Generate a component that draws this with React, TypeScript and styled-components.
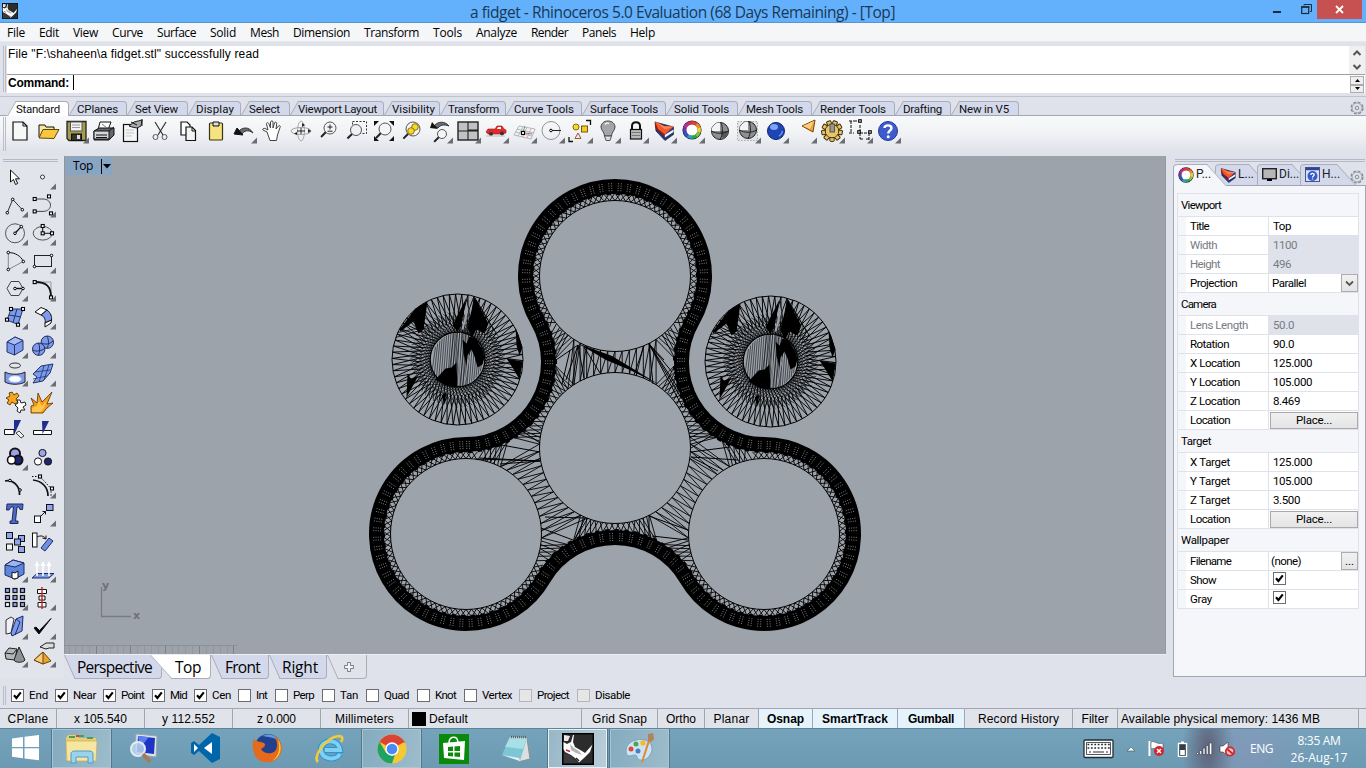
import React, { ReactNode, useLayoutEffect, useRef } from 'react';
import styled, { createGlobalStyle, css } from 'styled-components';

const ui = '"Open Sans", "Noto Sans", sans-serif';
const sans = '"Liberation Sans", Arial, sans-serif';
const narrow = 'Roboto, "Liberation Sans", sans-serif';

const Global = createGlobalStyle`
  * { box-sizing: border-box; }
  body { margin: 0; background: #dfe2ea; overflow: hidden; }
  svg { display: block; flex: none; }
`;

/* ---------- text helper: tracks a label so that it fills a given width ---------- */
const FitSpan = styled.span`
  white-space: pre;
  display: inline-block;
`;
const Fit = ({ w, children }: { w: number; children: string }) => {
  const ref = useRef<HTMLSpanElement>(null);
  useLayoutEffect(() => {
    const n = ref.current;
    if (!n) return;
    n.style.letterSpacing = '0px';
    const natural = n.getBoundingClientRect().width;
    n.style.letterSpacing = `${(w - natural) / children.length}px`;
  }, [w, children]);
  return <FitSpan ref={ref}>{children}</FitSpan>;
};

/* ---------- page frame ---------- */
const Screen = styled.div`
  width: 1366px;
  height: 768px;
  display: flex;
  flex-direction: column;
  background: #dfe2ea;
  color: #000;
  font: 12px ${sans};
  overflow: hidden;
  & > * { min-height: 0; }
`;
const TitleBar = styled.header`
  flex: 0 0 23px;
  display: grid;
  grid-template-columns: 120px 1fr 107px;
  background: #63b1fc;
  border-bottom: 1px solid #5795cf;
`;
const TitleIcon = styled.div`
  padding: 3px 2px;
`;
const TitleText = styled.div`
  font: 15.5px/22px ${ui};
  color: #1a3854;
  text-align: center;
  padding-top: 1px;
  padding-right: 27px;
  padding-left: 13px;
`;
const WinButtons = styled.div`
  display: flex;
  height: 19px;
`;
const WinButton = styled.div<{ $w: number; $close?: boolean }>`
  width: ${p => p.$w}px;
  display: flex;
  align-items: center;
  justify-content: center;
  background: ${p => (p.$close ? '#c75050' : 'transparent')};
`;
const MenuBar = styled.nav`
  flex: 0 0 19px;
  display: flex;
  gap: 14px;
  padding-left: 7px;
  background: #f4f6f8;
  border-bottom: 1px solid #e6e8ec;
  font: 12px/20px ${ui};
`;
const CommandArea = styled.section`
  flex: 0 0 55px;
  display: flex;
  padding: 4px 1px 0 3px;
  border-bottom: 1px solid #bfc3ce;
`;
const Grip = styled.div<{ $h: number }>`
  width: 3px;
  height: ${p => p.$h}px;
  border: solid #b9bec9;
  border-width: 0 1px;
  margin-right: 1px;
`;
const CommandBox = styled.div`
  flex: 1;
  height: 47px;
  display: flex;
  flex-direction: column;
  background: #fff;
`;
const HistoryRow = styled.div`
  height: 29px;
  display: flex;
  justify-content: space-between;
  border-bottom: 1px solid #9c9fa6;
  line-height: 16px;
  padding-left: 1px;
`;
const PromptRow = styled.div`
  height: 18px;
  display: flex;
  justify-content: space-between;
  padding-left: 1px;
  font-weight: bold;
  line-height: 16px;
`;
const Caret = styled.span`
  display: inline-block;
  width: 1px;
  height: 15px;
  background: #000;
  margin-left: 4px;
  vertical-align: top;
`;
const ScrollCol = styled.div`
  width: 16px;
  background: #f0f0f0;
`;
const SpinCol = styled.div`
  width: 15px;
  display: flex;
  flex-direction: column;
  padding: 1px 1px 0 0;
`;
const SpinButton = styled.div`
  flex: 1;
  border: 1px solid #adadad;
  background: #efefef;
  display: flex;
  align-items: center;
  justify-content: center;
`;
const ToolTabs = styled.div`
  flex: 0 0 19px;
  display: flex;
  padding: 4px 0 0 7px;
  border-bottom: 1px solid #a1a6b1;
`;
const ToolTab = styled.div<{ $w: number; $active?: boolean }>`
  position: relative;
  isolation: isolate;
  width: ${p => p.$w}px;
  height: ${p => (p.$active ? 15 : 14)}px;
  padding-left: ${p => (p.$active ? 9 : 8)}px;
  font: 11.5px/16px ${narrow};
  color: #111;
  &::before, &::after {
    content: '';
    position: absolute;
    z-index: -1;
    top: 0;
    bottom: 0;
    border-top: 1px solid #a9aebb;
    background: ${p => (p.$active ? '#fff' : '#d3d9ea')};
  }
  &::before {
    left: 0;
    width: 50%;
    transform: skewX(-30deg);
    transform-origin: 0 100%;
    border-left: 1px solid #a9aebb;
  }
  &::after {
    left: 45%;
    right: 0;
    border-right: 1px solid #a9aebb;
    border-top-right-radius: 4px;
  }
`;
const TabGear = styled.div`
  margin-left: auto;
  padding-right: 2px;
  height: 13px;
`;
const ToolBar = styled.div`
  flex: 0 0 40px;
  display: flex;
  padding: 1px 0 0 3px;
  background: linear-gradient(#f8f9fa, #f1f3f6 40%, #dfe2ea 92%);
`;
const ToolIcons = styled.div`
  display: flex;
  margin-left: -1px;
`;
const Work = styled.main`
  flex: 0 0 522px;
  display: flex;
`;
const LeftBar = styled.aside`
  width: 64px;
  padding: 3px 0 0 1px;
  background: #e1e4eb;
`;
const HGrip = styled.div<{ $w: number }>`
  width: ${p => p.$w}px;
  height: 3px;
  border: solid #b4b9c4;
  border-width: 1px 0;
  margin-left: 2px;
`;
const LeftGrid = styled.div`
  display: grid;
  grid-template-columns: 28px 28px;
  grid-auto-rows: 28.1px;
  margin-top: 1px;
`;
const Center = styled.div`
  width: 1102px;
  display: flex;
  flex-direction: column;
`;
const Viewport = styled.div`
  position: relative;
  height: 498px;
  background: #9da3ab;
  border-left: 1px solid #8f959f;
  border-right: 1px solid #949aa4;
`;
const Scene = styled.svg`
  position: absolute;
  left: -1px;
  top: 0;
`;
const ViewLabel = styled.div`
  position: absolute;
  left: 1px;
  top: 1px;
  width: 46px;
  height: 18px;
  display: flex;
  background: #89a5c4;
  font: 12px/18px ${ui};
  padding-left: 7px;
`;
const LabelDrop = styled.div`
  margin-left: 8px;
  margin-top: 2px;
  height: 15px;
  border-left: 1px solid #000;
  padding: 5px 0 0 1px;
`;
const ViewTabs = styled.div`
  display: flex;
  height: 24px;
  border-top: 1px solid #eef0f5;
`;
const ViewTab = styled.div<{ $w: number; $pad: number; $active?: boolean; $plain?: boolean; $lap?: number; $skew?: number }>`
  position: relative;
  isolation: isolate;
  width: ${p => p.$w}px;
  margin-left: ${p => -(p.$lap || 0)}px;
  padding-left: ${p => p.$pad}px;
  height: 24px;
  font: 15.5px/25px ${ui};
  &::before, &::after {
    content: '';
    position: absolute;
    z-index: -1;
    top: 0;
    bottom: 0;
    border-bottom: 1px solid #a9aebb;
    background: ${p => (p.$active ? '#fff' : p.$plain ? '#e0e3ea' : '#d3d9ea')};
  }
  &::before {
    left: 0;
    width: 45%;
    transform: skewX(${p => p.$skew || 24}deg);
    transform-origin: 0 0;
    border-left: 1px solid #a9aebb;
  }
  &::after {
    left: ${p => (p.$active ? 40 : 35)}%;
    right: 0;
    border-right: 1px solid #a9aebb;
    border-bottom-right-radius: 4px;
  }
`;
const RightPanel = styled.aside`
  width: 193px;
  margin-left: 7px;
  display: flex;
  flex-direction: column;
  padding-top: 3px;
`;
const PanelTabs = styled.div`
  display: flex;
  height: 21px;
  margin-top: 2px;
`;
const PanelTab = styled.div<{ $w: number; $active?: boolean }>`
  position: relative;
  isolation: isolate;
  display: flex;
  gap: 2px;
  z-index: ${p => (p.$active ? 2 : 1)};
  width: ${p => p.$w}px;
  height: ${p => (p.$active ? 22 : 21)}px;
  padding: 3px 0 0 4px;
  font: 12px/14px ${narrow};
  border-left: 1px solid #a9aebb;
  border-top-left-radius: 4px;
  color: #222;
  &::before, &::after {
    content: '';
    position: absolute;
    z-index: -1;
    top: 0;
    bottom: 0;
    border-top: 1px solid #a9aebb;
    background: ${p => (p.$active ? '#f5f6fa' : '#d3d9ea')};
  }
  &::before {
    left: 0;
    width: 72%;
    border-top-left-radius: 4px;
  }
  &::after {
    left: 8px;
    right: 8px;
    transform: skewX(42deg);
    transform-origin: 0 0;
    border-right: 1px solid #a9aebb;
  }
`;
const PanelGear = styled.div`
  margin-left: auto;
  padding: 6px 2px 0 0;
`;
const PanelBody = styled.div`
  height: 492px;
  border: 1px solid #a1a6b1;
  background: #f5f6fa;
  padding: 7px 6px 0 3px;
`;
const Grid = styled.div`
  border: solid #dfe2ea;
  border-width: 1px 1px 0 1px;
`;
const GroupHead = styled.div`
  height: 23px;
  border-bottom: 1px solid #dfe2ea;
  font: 11.5px/22px ${narrow};
  padding-left: 3px;
`;
const PropRow = styled.div<{ $dim?: boolean }>`
  height: 19px;
  display: grid;
  grid-template-columns: 8px 83px 1fr;
  border-bottom: 1px solid #dfe2ea;
  font: 11.5px/18px ${narrow};
  color: ${p => (p.$dim ? '#777b82' : '#000')};
`;
const PropLabel = styled.div`
  background: #fff;
  padding-left: 4px;
  border-right: 1px solid #dfe2ea;
`;
const PropValue = styled.div<{ $dim?: boolean; $pad?: number }>`
  background: ${p => (p.$dim ? '#dfe2ea' : '#fff')};
  padding-left: ${p => p.$pad ?? 4}px;
  display: flex;
  justify-content: space-between;
`;
const PlaceButton = styled.div`
  flex: 1;
  margin-top: 1px;
  height: 17px;
  border: 1px solid #a9a9ab;
  background: linear-gradient(#f1f1f1, #e4e4e4);
  text-align: center;
  line-height: 15px;
`;
const SmallButton = styled.div`
  width: 17px;
  height: 18px;
  border: 1px solid #adadad;
  background: linear-gradient(#f1f1f1, #e4e4e4);
  display: flex;
  justify-content: center;
  align-items: center;
  line-height: 14px;
`;
const Check = styled.div<{ $dim?: boolean }>`
  width: 13px;
  height: 13px;
  flex: none;
  border: 1px solid ${p => (p.$dim ? '#b4b6ba' : '#6a6c70')};
  background: ${p => (p.$dim ? '#e6e6e6' : '#fff')};
`;
const PropCheck = styled(Check)`
  margin-top: 1px;
`;
const SnapRow = styled.div`
  flex: 0 0 30px;
  display: flex;
  align-items: center;
  padding: 4px 0 0 3px;
`;
const SnapItem = styled.label<{ $w: number }>`
  width: ${p => p.$w}px;
  display: flex;
  align-items: center;
  gap: 5px;
  font: 11.5px/14px ${narrow};
`;
const SnapList = styled.div`
  display: flex;
  padding-left: 4px;
`;
const StatusBar = styled.div`
  flex: 0 0 20px;
  display: flex;
  border-top: 1px solid #a2a6b3;
  font: 12px/18px ${sans};
  background: #e0e3ea;
`;
const StatusCell = styled.div<{ $w: number; $on?: boolean; $left?: boolean }>`
  width: ${p => p.$w}px;
  display: flex;
  align-items: center;
  justify-content: ${p => (p.$left ? 'flex-start' : 'center')};
  gap: 3px;
  padding-left: ${p => (p.$left ? 3 : 0)}px;
  border-right: 1px solid #a2a6b3;
  ${p => p.$on && css`
    background: #e5f3fd;
    font-weight: bold;
  `}
`;
const Swatch = styled.i`
  width: 14px;
  height: 14px;
  background: #000;
`;
const TaskBar = styled.footer`
  flex: 0 0 40px;
  display: flex;
  background:
    radial-gradient(ellipse 26px 60px at 1208px 20px, rgba(84, 78, 98, 0.75), rgba(84, 78, 98, 0) 100%),
    radial-gradient(ellipse 70px 60px at 1250px 20px, rgba(136, 150, 185, 0.7), rgba(136, 150, 185, 0) 100%),
    linear-gradient(#75a3bb, #6d9ab3);
  border-top: 1px solid #5d8498;
`;
const StartButton = styled.div`
  width: 52px;
  padding: 5px 0 0 11px;
`;
const Tasks = styled.div`
  display: flex;
  gap: 3px;
`;
const Task = styled.div<{ $state?: 'open' | 'active' }>`
  width: 59px;
  height: 39px;
  display: flex;
  align-items: center;
  justify-content: center;
  border: 1px solid transparent;
  ${p => p.$state && css`
    border-color: ${p.$state === 'active' ? '#e8f1f5' : '#a9c4d2'};
    background: ${p.$state === 'active' ? 'linear-gradient(100deg, #97b7c7, #b9ced9)' : 'linear-gradient(100deg, #84abbf, #9dbccb)'};
    box-shadow: -1px 0 0 #54788a, 1px 0 0 #54788a;
  `}
`;
const Tray = styled.div`
  margin-left: auto;
  display: flex;
  align-items: center;
  width: 283px;
  color: #fff;
  font: 12px/17px ${ui};
`;
const TraySlot = styled.div<{ $w: number }>`
  width: ${p => p.$w}px;
  flex: none;
`;
const Clock = styled.div`
  text-align: center;
  width: 60px;
`;

/* ---------- small drawings ---------- */
const Tri = () => <path d="M27 20.5V26.5H21Z" fill="#6b6d72" />;
const Tool = ({ children, tri }: { children: ReactNode; tri?: boolean }) => (
  <svg width="28" height="28" viewBox="0 0 28 28" fill="none" stroke="#111" strokeWidth="1">
    {children}
    {tri && <g stroke="none"><Tri /></g>}
  </svg>
);
const Sq = ({ x, y, s = 3 }: { x: number; y: number; s?: number }) => (
  <rect x={x - s / 2} y={y - s / 2} width={s} height={s} fill="#fff" stroke="#000" strokeWidth="1.1" />
);
const Dot = ({ x, y }: { x: number; y: number }) => <circle cx={x} cy={y} r="1.3" fill="#fff" stroke="#000" />;
const Glass = ({ x = 16, y = 11, r = 6, fill = '#f4f5f7' }) => (
  <g>
    <circle cx={x} cy={y} r={r} fill={fill} stroke="#555" />
    <path d={`M${x - r * 0.72} ${y + r * 0.72}L${x - r * 0.72 - 4.6} ${y + r * 0.72 + 4.6}`} stroke="#222" strokeWidth="2" />
  </g>
);
const Gear = () => (
  <svg width="14" height="14" viewBox="0 0 14 14" fill="none" stroke="#888c93">
    <circle cx="7" cy="7" r="5.9" strokeDasharray="3 1.63" strokeWidth="1.3" />
    <circle cx="7" cy="7" r="4.9" strokeWidth="0.7" />
    <circle cx="7" cy="7" r="1.8" />
  </svg>
);
const Tick = () => (
  <svg width="11" height="11" viewBox="0 0 11 11">
    <path d="M2 5.2L4.4 8L8.8 2.4" fill="none" stroke="#000" strokeWidth="2.1" />
  </svg>
);
const wheelColors = ['#e2412c', '#f08a24', '#f2d230', '#7cc63f', '#27a355', '#2a9fc4', '#2c55c8', '#6a35b5', '#b32f9c', '#d92b63'];
const Wheel = ({ cx = 14, cy = 13, r = 7.3, w = 3.4 }) => (
  <g fill="none" stroke="none">
    <circle cx={cx} cy={cy} r={r} stroke="#222" strokeWidth={w + 1.2} />
    {wheelColors.map((c, i) => {
      const a = ((i * 36 - 90) * Math.PI) / 180;
      const b = (((i + 1) * 36 - 88) * Math.PI) / 180;
      return (
        <path key={c} stroke={c} strokeWidth={w}
          d={`M${cx + r * Math.cos(a)} ${cy + r * Math.sin(a)}A${r} ${r} 0 0 1 ${cx + r * Math.cos(b)} ${cy + r * Math.sin(b)}`} />
      );
    })}
    <circle cx={cx} cy={cy} r={r - w / 2} fill="#fff" />
  </g>
);
const Layers = () => (
  <g>
    <path d="M5 5L6 14L15 23.500L23.500 17.500V10Z" fill="#1d3784" stroke="#222" strokeWidth="0.700" />
    <path d="M14.500 18L23.500 12.500V15L15 20.500Z" fill="#f4f4f8" />
    <path d="M5 5L5.500 11L14.500 20V15.500Z" fill="#a3160c" />
    <path d="M5 4.500L14 9L23.500 9.800L15 17.500L8 12Z" fill="#f4572a" />
    <path d="M5 4.500L14 9L23.500 9.800L15 12.500Z" fill="#fb8352" />
  </g>
);
const RhinoHead = ({ size }: { size: number }) => (
  <svg width={size} height={size} viewBox="0 0 32 32">
    <rect x="0.7" y="0.7" width="30.6" height="30.6" fill="#2c2c2d" stroke="#000" strokeWidth="1.4" />
    <path d="M1.500 9L5 11L9 9L11 2H12L11 9L13 14L20 18L23 20L30.500 11.500L28 19L22 25L17 29.500L13 25L9 22L3 19L1.500 16Z" fill="#fff" />
    <path d="M2 2L8 3L6 8L2 8Z" fill="#e9e9ea" />
    <path d="M8 11L12 15L17 18L20 22L14 20L9 17Z" fill="#b5b5b6" />
    <path d="M2 20L8 22L12 26L16 30H2Z" fill="#3b3b3d" />
    <path d="M4 17L8 18.500" stroke="#b5273a" strokeWidth="1.400" fill="none" />
    <path d="M14 25L17 28" stroke="#222" strokeWidth="1.6" />
  </svg>
);

const toolIcons: ReactNode[] = [
  <Tool><path d="M7 5H17L21 9V23H7Z" fill="#f7f7f8" strokeWidth="1.2" /><path d="M17 5V9H21" /></Tool>,
  <Tool><path d="M5 20V8H11L12 10H20V13" fill="#fbe79b" /><path d="M5 21L9 12.500H25L20 21.5Z" fill="#f9c63c" stroke="#5a4310" /></Tool>,
  <Tool tri><path d="M5 4.500H24V23.500H7L5 21.500Z" fill="#a79c4e" stroke="#222" strokeWidth="1.3" /><rect x="8.500" y="5" width="11.500" height="9" fill="#f2f2f2" stroke="#555" /><path d="M10 8H18M10 10.500H18" stroke="#999" /><rect x="9.500" y="17" width="10" height="6.500" fill="#333" /><rect x="15" y="18" width="3" height="4" fill="#ddd" stroke="none" /></Tool>,
  <Tool><path d="M10 5H21L18 13H8Z" fill="#fff" /><path d="M4 14L9 11H24V18L19 23H4Z" fill="#63666b" /><path d="M4 14H19V22H4Z" fill="#d5d6d8" /><path d="M19 14L24 10M6 18H17M6 20.500H17" /><path d="M12 7L17 11" stroke="#777" /></Tool>,
  <Tool><rect x="5.500" y="7.500" width="14" height="17" fill="#f5f5f6" strokeWidth="1.2" /><path d="M8 13H16M8 16H16M8 19H14" stroke="#c2c5c9" /><path d="M11 9L16 5L24 3L23 9L19 11L14 10Z" fill="#a9aaac" stroke="#222" /><path d="M13 5L19 8M24 2V9" /></Tool>,
  <Tool><path d="M9 5L17 18M20 5L12 18" stroke="#333" strokeWidth="1.2" /><circle cx="9.500" cy="20" r="2.500" stroke="#555" /><circle cx="18.500" cy="20" r="2.500" stroke="#555" /></Tool>,
  <Tool><path d="M7 5H13L16 8V18H7Z" fill="#fff" strokeWidth="1.2" /><path d="M12 10H18L21.500 13.500V23.500H12Z" fill="#f3f3f4" strokeWidth="1.2" /><path d="M18 10V14H21" /></Tool>,
  <Tool><rect x="7.500" y="6" width="13" height="17" rx="1" fill="#f7e37f" stroke="#3b3513" strokeWidth="1.2" /><path d="M11 5H17V9H11Z" fill="#ddd" /></Tool>,
  <Tool tri><path d="M8 15C12 10 19 9 23 16C18 12 14 14 12 17Z" fill="#6b6d70" stroke="#333" /><path d="M4 17L7 11L13 18Z" fill="#111" /></Tool>,
  <Tool><path d="M9 15L5 13C4 12 6 10.500 8 12L10 13L8.500 7C8.500 5.500 10.500 5 11 7L12.500 11V5C13 3.500 15 3.500 15 5V11L16.500 6C17 4.500 19 5 18.700 7L18 12L20.500 9C21.500 8 23 9 22 10.500L19.500 18L18.500 23.500H12Z" fill="#fff" stroke="#444" /></Tool>,
  <Tool><ellipse cx="15" cy="14" rx="10" ry="3.500" stroke="#8c8c8c" strokeWidth="0.800" /><ellipse cx="15" cy="14" rx="3.500" ry="10" stroke="#999" strokeWidth="0.800" /><path d="M16 6V10L19 8ZM25 14L22 12V16ZM11 15V18L8 16.500Z" fill="#222" stroke="none" /><path d="M15 11V17M11 14H19" strokeWidth="0.900" /></Tool>,
  <Tool><Glass /><path d="M13.500 10H18.500M16 7.500V12.500M13.500 14.200H18.500" stroke="#222" /></Tool>,
  <Tool><rect x="10.500" y="4.500" width="14" height="12" strokeDasharray="2 1.500" stroke="#333" /><Glass x={14} y={13} r={5.5} fill="#eff1f4" /></Tool>,
  <Tool><Glass x={15} y={12} r={6} /><path d="M4 4H9L4 9ZM24 4V9L19 4ZM24 24H19L24 19ZM4 24V19L9 24Z" fill="#111" stroke="none" /></Tool>,
  <Tool><Glass x={15} y={12} r={7} /><circle cx="17" cy="10" r="3.300" fill="#f7d92c" stroke="#8a7410" /><circle cx="13" cy="14" r="3.300" fill="#f7d92c" stroke="#8a7410" /></Tool>,
  <Tool tri><path d="M8 9C12 4 19 4 23 9C18 7 14 8 12 11Z" fill="#6b6d70" stroke="#333" /><path d="M4 11L6 5L12 12Z" fill="#111" stroke="none" /><Glass x={16} y={17} r={4.5} /></Tool>,
  <Tool tri><rect x="4" y="5" width="20" height="18" fill="#c1c2c4" stroke="#222" strokeWidth="1.400" /><path d="M14 5V23M4 14H24M14 13H24" stroke="#222" strokeWidth="1.100" /></Tool>,
  <Tool tri><path d="M4 15L6 12L13 12L15 9H20L22 12L24 13V16L20 17H6Z" fill="#df2a2a" stroke="#a01414" strokeWidth="0.600" /><path d="M16 10H19V12H15Z" fill="#fff" stroke="none" /><circle cx="9" cy="17" r="2" fill="#333" stroke="none" /><circle cx="20" cy="16.500" r="2" fill="#333" stroke="none" /><path d="M4 19H23" stroke="#bbb" /></Tool>,
  <Tool tri><path d="M9 9L25 12L21 22L4 18ZM7 12L24 16M5.500 15L22 19M13 10L8 19M17 10.500L12.500 20M21 11.500L17 21" stroke="#a5a8ae" strokeWidth="0.800" /><path d="M13 15L15 9" stroke="#5aa56a" /><path d="M15 16L22 17" stroke="#c66" /><Sq x={13} y={16} /></Tool>,
  <Tool tri><circle cx="13" cy="13.500" r="9" stroke="#85878b" strokeWidth="0.900" /><path d="M13 13.500H23" stroke="#222" /><Dot x={13} y={13.5} /></Tool>,
  <Tool tri><circle cx="10" cy="10" r="3" fill="#f7d92c" stroke="#8a6a10" /><rect x="15.500" y="9" width="6" height="6" fill="#f7c92c" stroke="#7a5a00" /><path d="M12 16L15 21.500H9Z" stroke="#a0522d" /><path d="M20 3.500H24.500V8M3 20V24.500H7" strokeWidth="1.300" /></Tool>,
  <Tool tri><path d="M14 4C9.500 4 7 7 7 10C7 13.500 10.500 15 10.500 19H17.500C17.500 15 21 13.500 21 10C21 7 18.500 4 14 4Z" fill="#a3a5a8" stroke="#444" /><path d="M10.500 19H17.500L16 23.500H12Z" fill="#ddd" stroke="#555" /><path d="M11 7.500C12 6 14 6 15 6.500" stroke="#eee" strokeWidth="1.500" /></Tool>,
  <Tool tri><path d="M10 13V9C10 4 18 4 18 9V13" strokeWidth="2" /><rect x="8.500" y="12.500" width="11" height="9.500" fill="#b9babc" strokeWidth="1.200" /><path d="M10 15.500H18M10 18.500H18" stroke="#777" /></Tool>,
  <Tool tri><g stroke="none"><Layers /></g></Tool>,
  <Tool tri><Wheel /></Tool>,
  <Tool><circle cx="14" cy="14" r="8.500" fill="#8e9093" stroke="#222" /><path d="M14 5.500A8.500 8.500 0 0 0 5.500 14H14Z" fill="#f3f3f3" stroke="none" /><path d="M14 14H22.500A8.500 8.500 0 0 1 17 22Z" fill="#55575b" stroke="none" /><path d="M5.500 14C10 17 18 17 22.500 14M15 5.500C17 10 17 18 14 22.500" stroke="#222" /></Tool>,
  <Tool tri><rect x="3.500" y="4.500" width="20" height="19" strokeDasharray="1.500 1.500" stroke="#a5a8ad" fill="#e1e3e6" /><circle cx="14" cy="13" r="8.500" fill="#8e9093" stroke="#222" /><path d="M14 4.500A8.500 8.500 0 0 0 5.500 13H14Z" fill="#f3f3f3" stroke="none" /><path d="M5.500 13C10 16 18 16 22.500 13M15 4.500C17 9 17 17 14 21.500" stroke="#222" /></Tool>,
  <Tool tri><circle cx="14" cy="14" r="8.500" fill="#1d45b4" stroke="#0e2466" /><ellipse cx="12" cy="10" rx="4" ry="3" fill="#7fa5f2" stroke="none" /><path d="M17 19C19 18 20 17 20.500 14" stroke="#6d97ef" strokeWidth="1.500" /></Tool>,
  <Tool tri><path d="M12 9L25 3L23 15Z" fill="#f1a33b" stroke="#7a4708" /><path d="M13 9L24 4L20 12Z" fill="#fbd07c" stroke="none" /></Tool>,
  <Tool tri>
    {Array.from({ length: 9 }, (_, i) => (
      <rect key={i} x="11.800" y="3.600" width="4.400" height="5" rx="0.800" fill="#e9c468" stroke="#3d300b" transform={`rotate(${i * 40 + 20} 14 14)`} />
    ))}
    <circle cx="14" cy="14" r="6.800" fill="#e9c468" stroke="#3d300b" />
    <path d="M9 10L19 10L20 16L17 20H11L8 16Z" fill="#e9c468" stroke="none" />
    <rect x="12" y="7" width="4.500" height="8" fill="#9a968a" stroke="#555" />
  </Tool>,
  <Tool tri><path d="M5 4V16M3 4H8M8 4H14M3 16H8M14 8V22M14 16H23M23 16V24M14 22H17M20 22H23" strokeDasharray="3 1" /><Sq x={14} y={4} s={2.500} /><Sq x={13} y={15} s={2.500} /><Sq x={24} y={15} s={2.500} /></Tool>,
  <Tool tri><circle cx="14" cy="14" r="9.500" fill="#3d5bcc" stroke="#24399a" /><path d="M10.500 11C10.500 7.500 17.500 7.500 17.500 11.200C17.500 13.500 14.200 13.500 14.200 16.500" stroke="#fff" strokeWidth="2.400" /><circle cx="14.200" cy="19.800" r="1.500" fill="#fff" stroke="none" /></Tool>,
];

const blue = '#7d9bea';
const leftIcons: ReactNode[] = [
  <Tool><path d="M9.500 7V19L12.500 16.500L14.500 21.500L16.700 20.500L14.500 15.800H18.500Z" fill="#fff" /></Tool>,
  <Tool tri><circle cx="13.500" cy="14" r="2" fill="#fff" stroke="#333" /></Tool>,
  <Tool tri><path d="M6.300 21.700L11.700 8.400L21.300 18.700" stroke="#333" /><Dot x={6.300} y={21.700} /><Dot x={11.700} y={8.400} /><Dot x={21.300} y={18.700} /></Tool>,
  <Tool tri><path d="M6 8H14C24 8 24 20.400 14 20.400H6" stroke="#444" /><Sq x={5.700} y={8} /><Sq x={20} y={5.400} /><Sq x={5.700} y={20.400} /><Sq x={22} y={22.400} /></Tool>,
  <Tool tri><circle cx="14" cy="14.300" r="9.500" stroke="#555" /><path d="M14 14.300L20.300 7.600" strokeWidth="1.300" /><Dot x={14} y={14.300} /><Dot x={20.300} y={7.600} /></Tool>,
  <Tool tri><ellipse cx="13.700" cy="14.300" rx="9.500" ry="6.800" stroke="#555" /><path d="M13.700 7V14.300H23" /><Sq x={13.700} y={7} /><Sq x={13.700} y={14.300} /><Sq x={23} y={14.300} /></Tool>,
  <Tool tri><path d="M7.300 5.500C14 5.500 20 9 22.300 14.500" /><path d="M7.300 5.500V22.500L22.300 14.500" stroke="#888" /><Dot x={7.300} y={5.500} /><Dot x={7.300} y={22.500} /><Dot x={22.300} y={14.500} /></Tool>,
  <Tool tri><rect x="5.500" y="8.500" width="17" height="11" stroke="#222" /><Dot x={22.500} y={8.500} /><Dot x={5.500} y={19.500} /></Tool>,
  <Tool tri><path d="M6 13.500L10 6.500H18L22 13.500L18 20.500H10Z" stroke="#444" /><path d="M14 13.500H22" strokeWidth="1.400" /><Dot x={14} y={13.500} /><Dot x={22} y={13.500} /></Tool>,
  <Tool tri><path d="M8 7H22V21" stroke="#999" /><path d="M6 7C17 7 22 11 22 22" strokeWidth="1.800" /><Sq x={5.700} y={7.100} /><Sq x={22} y={22.400} /></Tool>,
  <Tool tri><path d="M10 6H22L17 21.500L6 17Z" fill={blue} stroke="#23346f" /><path d="M16 6L12 19.500M8 12L20 14" stroke="#23346f" /><Sq x={10} y={6} /><Sq x={22} y={6} /><Sq x={6} y={16.700} /><Sq x={17} y={21.700} /></Tool>,
  <Tool tri><path d="M6 9L12 4.500L18 7L12 12Z" fill="#fff" /><path d="M12 12L18 7C22 10 23 14 22.500 17L16 20C17 17 15 13 12 12Z" fill={blue} /><path d="M22.500 17L16 20L16 24L22 20Z" fill="#fff" /></Tool>,
  <Tool tri><path d="M6 10L14 5L22 8.500V18L13.500 23L6 20Z" fill={blue} stroke="#23346f" /><path d="M6 10L13.500 13L22 8.500L14 5Z" fill="#a9bdf5" stroke="#23346f" /><path d="M13.500 13V23" stroke="#23346f" /></Tool>,
  <Tool tri><circle cx="18.300" cy="10.200" r="6.200" fill={blue} stroke="#1f2d63" /><circle cx="9.700" cy="17.200" r="6.200" fill={blue} stroke="#1f2d63" /><path d="M13 11C16 13 21 12 24 9M18 4C20 8 20 13 18 16M4 18C7 20 13 19 16 16M9.500 11C11 14 11 20 9.500 23" stroke="#1f2d63" /></Tool>,
  <Tool tri><ellipse cx="14" cy="5.500" rx="5.500" ry="2.500" stroke="#333" /><path d="M4 12C9 15 19 15 24 12V22C19 25 9 25 4 22Z" fill={blue} stroke="#222" /><ellipse cx="14" cy="19" rx="6" ry="3" fill="#fff" stroke="#dfe6fb" /></Tool>,
  <Tool tri><path d="M4 14L12 6L24 4L21 13L14 21L4 23L8 17Z" fill={blue} stroke="#23346f" /><path d="M6 12L21 10M4 19L18 16M10 22L15 6M15 20L20 5" stroke="#23346f" strokeWidth="0.800" /></Tool>,
  <Tool><path d="M5 10L9 8L8 5L11 4L13 7L16 5L18 8L15 11L17 14L14 16L11 14L9 17L6 15L8 12Z" fill="#f7a51e" stroke="#6b430a" /><path d="M14 17L17 15L16 12L19 12L20 15L24 14L25 17L22 19L24 22L20 22L19 25L16 23L17 20Z" fill="#fff" stroke="#222" /></Tool>,
  <Tool><path d="M2 10L8 15L9 5L13 14L23 4L18 16L24 15L18 20L14 25H2V18L5 17Z" fill="#f49a1c" stroke="#5c3306" strokeWidth="0.800" /><path d="M3 24V20L8 18L10 13L13 18L18 12L15 20L12 24Z" fill="#ffc74a" stroke="none" /></Tool>,
  <Tool><path d="M13 4H20L13 19Z" fill="#1e2f8c" stroke="none" /><path d="M3.500 13.500H13V18.500H3.500Z" fill="#fff" /><path d="M15 17L18 15L23 20L20 22Z" fill="#eee" stroke="#444" /></Tool>,
  <Tool><path d="M4.500 14.500H22.500V18.500H4.500Z" fill="#fff" /><path d="M13 5H20L13.500 18Z" fill="#1e2f8c" stroke="none" /></Tool>,
  <Tool tri><circle cx="14" cy="9.500" r="5" fill="#9ba4ea" strokeWidth="2" /><circle cx="17" cy="16" r="4.500" fill="#1d2470" strokeWidth="2" /><circle cx="10.500" cy="16" r="4" fill="#fff" strokeWidth="1.600" /></Tool>,
  <Tool><circle cx="13.500" cy="9" r="3.600" fill="#9ba4ea" /><circle cx="9" cy="17.500" r="3.600" fill="#fff" /><circle cx="19" cy="17.500" r="3.600" fill="#1d2470" /></Tool>,
  <Tool><path d="M4 9C12 7 19 14 18.500 23" strokeWidth="1.700" /><Dot x={9} y={8.500} /><Dot x={19} y={18} /></Tool>,
  <Tool tri><path d="M4 8C13 9 19 15 19 24" strokeWidth="1.700" /><path d="M3 4.500H11L22 16.500V25" strokeDasharray="1.500 1.500" /><Sq x={11} y={4.500} /><Sq x={23} y={16.500} /></Tool>,
  <Tool><path d="M6 4H22L21.500 9.500H19L18 7H16L14.500 21H17V23.500H9V21H11L12.500 7H10L8 10H5.500Z" fill="#4c6cc4" stroke="#1d2b64" /></Tool>,
  <Tool tri><rect x="5.500" y="16" width="6" height="6.500" fill="#fff" /><rect x="17.500" y="4.500" width="6.500" height="6" fill="#8fa6ee" /><path d="M12 16L16.500 11.500M16.500 11.500V14.500M16.500 11.500H13.500" /></Tool>,
  <Tool><rect x="5.500" y="4.500" width="6" height="6" fill="#8fa6ee" /><rect x="17.500" y="7.500" width="6" height="6" fill="#8fa6ee" /><rect x="13.500" y="11" width="6" height="6" fill="#8fa6ee" /><rect x="5.500" y="16" width="6" height="6" fill="#f3f3f3" /><rect x="17.500" y="18.500" width="6" height="6" fill="#8fa6ee" /></Tool>,
  <Tool><rect x="3.500" y="5" width="4.500" height="14" fill="#fff" /><path d="M12 20L20 10L24 13L16 23Z" fill="#6f8fe4" stroke="#1d2b64" /><path d="M8 9C12 7 15 8 17 11M17 11L13.500 10M17 11V7.500" /></Tool>,
  <Tool tri><path d="M4 9L12 4L23 7V18L14 23L4 19Z" fill="#5f86dd" stroke="#1d2b64" /><path d="M4 9L14 11L23 7L12 4Z" fill="#9bb5f3" stroke="#1d2b64" /><path d="M11 16L14 17L17 15V22L13 23L11 22Z" fill="#fff" /></Tool>,
  <Tool tri><path d="M3 22L8 17.500H25L20 22Z" fill="#7d9bea" stroke="#1d2b64" /><path d="M8 20V8M14 20V8M20 20V8" stroke="#fff" strokeWidth="1.600" /><path d="M5.500 10L8 5L10.500 10ZM11.500 10L14 5L16.500 10ZM17.500 10L20 5L22.500 10Z" fill="#fff" stroke="none" /></Tool>,
  <Tool tri>{[5, 12, 19].map(y => [4, 11.500, 19].map(x => <rect key={`${x}-${y}`} x={x + 0.500} y={y - 0.500} width="4" height="4" fill={y === 19 && x === 4 ? '#fff' : '#8fa6ee'} strokeWidth="1.200" />))}</Tool>,
  <Tool tri><path d="M8.500 5.500H17.500V9.500H8.500ZM10 12H16V16H10ZM9 18.500H17V23H9Z" fill="#fff" /><path d="M13 3V25" stroke="#cf1f1f" strokeWidth="1.400" /></Tool>,
  <Tool tri><path d="M5 7L10 4L13 6L10 20L5 21Z" fill="#eef0f4" stroke="#333" /><path d="M15 6L22 3L21 18L11 23L10 20Z" fill="#7d9bea" stroke="#1d2b64" /><path d="M15 6L19 9L14 22" stroke="#1d2b64" /></Tool>,
  <Tool tri><path d="M5 15L10 21L22 5.500L10.500 17.500L7 14Z" fill="#000" strokeWidth="1" /></Tool>,
  <Tool tri><path d="M4 12L8 7L16 8L14 19L5 18Z" fill="#b4b6b9" stroke="#222" /><path d="M4 12L12 13L16 8" stroke="#222" /><path d="M18 6L24 19C22 22 14 22 13 19Z" fill="#8e9094" stroke="#222" /></Tool>,
  <Tool tri><path d="M14 11L22 20L14 23L5 19Z" fill="#eaa32f" stroke="#6b430a" /><path d="M14 11V23L5 19Z" fill="#f8cf78" stroke="#6b430a" /><path d="M11 6L17 2L25 2V7H20L17 8Z" fill="#ddd" stroke="#222" /></Tool>,
];

/* ---------- the spinner mesh ---------- */
type P = [number, number];
const at = (c: P, r: number, deg: number): P => [
  c[0] + r * Math.cos((deg * Math.PI) / 180),
  c[1] + r * Math.sin((deg * Math.PI) / 180),
];
const seg = (a: P, b: P) => `M${a[0].toFixed(1)} ${a[1].toFixed(1)}L${b[0].toFixed(1)} ${b[1].toFixed(1)}`;
const top: P = [615, 276];
const left: P = [466, 534];
const right: P = [764, 534];
const mid: P = [615, 448];
const holes = [top, left, right, mid];
const HOLE = 75.5;

/* body outline, moved inwards by d */
const outline = (d: number) => {
  const r = 97 - d;
  const k = 75 + d;
  const p = (c: P, a: number) => at(c, r, a).map(n => n.toFixed(2)).join(' ');
  return `M${p(top, 150)}A${r} ${r} 0 1 1 ${p(top, 30)}A${k} ${k} 0 0 0 ${p(right, -90)}A${r} ${r} 0 1 1 ${p(right, 150)}A${k} ${k} 0 0 0 ${p(left, 30)}A${r} ${r} 0 1 1 ${p(left, -90)}A${k} ${k} 0 0 0 ${p(top, 150)}Z`;
};

/* short radial ticks of dots that run along the middle of the rim */
const rimTicks = () => {
  const out: string[] = [];
  const tick = (c: P, a: number, r0: number, r1: number) => {
    [-0.9, 0.9].forEach(o => out.push(seg(at(c, r0, a + o), at(c, r1, a + o))));
  };
  const lobes: [P, number][] = [[top, 150], [left, 30], [right, -90]];
  lobes.forEach(([c, s]) => { for (let a = s + 3; a < s + 240; a += 6) tick(c, a, 85, 93); });
  const coves: [P, number][] = [[[466, 362], 30], [[764, 362], 150], [[615, 620], -90]];
  coves.forEach(([c, s]) => { for (let a = s - 57; a < s + 60; a += 6.8) tick(c, a, 79, 87); });
  return out.join('');
};

const meshPath = () => {
  const out: string[] = [];
  const lobes: [P, number][] = [[top, 150], [left, 30], [right, -90]];
  lobes.forEach(([c, start]) => {
    for (let a = start - 8; a < start + 246; a += 4) {
      out.push(seg(at(c, HOLE, a), at(c, 83, a + 4)), seg(at(c, 83, a), at(c, HOLE, a + 4)));
    }
  });
  const coves: [P, number][] = [[[466, 362], 30], [[764, 362], 150], [[615, 620], -90]];
  coves.forEach(([k, dir]) => {
    for (let a = dir - 48; a <= dir + 48; a += 4) {
      const p = at(k, 89, a);
      let best = mid;
      let dist = 1e9;
      holes.forEach(h => {
        const d = Math.hypot(p[0] - h[0], p[1] - h[1]);
        if (d < dist) { dist = d; best = h; }
      });
      const ang = (Math.atan2(p[1] - best[1], p[0] - best[0]) * 180) / Math.PI;
      out.push(seg(p, at(best, HOLE, ang + 3)), seg(p, at(best, HOLE, ang - 3)));
    }
  });
  const necks: [P, number][] = [[top, 90], [left, -30], [right, 210]];
  necks.forEach(([c, dir]) => {
    for (let a = -33; a <= 33; a += 5.5) {
      const p = at(c, HOLE, dir + a);
      out.push(seg(p, at(mid, HOLE, dir + 180 - a)), seg(p, at(mid, HOLE, dir + 180 - a - 5.5)));
    }
  });
  return out.join('');
};

const fanPath = [
  'M578 345L566 380M578 345L572 386M578 345L584 378M578 345L556 360M584 347L600 373M584 347L584 380M570 350L562 384',
  'M649 344L676 385M649 344L680 396M649 344L683 408M650 345L672 372M649 344L664 360M649 344L653 384M644 346L634 375',
  'M540 461L480 458M540 461L476 459M540 461L500 464M540 452L496 444M540 443L518 428',
  'M691 452L730 447M691 457L738 460M691 457L718 471M691 448L714 434',
  'M585 518L575 539M585 518L545 517M573 540L541 528M649 516L649 536M649 516L688 530M652 536L688 540',
].join('');

const Disc = ({ x, y }: { x: number; y: number }) => {
  const o: P = [0, 0];
  const lines: string[] = [];
  for (let i = 0; i < 66; i++) {
    const a = i * (360 / 66) + 1;
    lines.push(seg(at(o, 65.5, a), at(o, 27, a + 13)), seg(at(o, 65.5, a), at(o, 36, a - 5)));
  }
  const fine: string[] = [];
  for (let i = 0; i < 60; i++) {
    const a = i * 6;
    fine.push(seg(at(o, 48, a), at(o, 27.5, a + 34)), seg(at(o, 44, a), at(o, 27.5, a - 26)));
  }
  for (let i = -24; i <= 25; i += 2.2) {
    const h = Math.sqrt(27 * 27 - i * i);
    fine.push(seg([i + 2, -h], [i - 1.5, h]));
  }
  for (let i = -6; i <= 12; i += 3) fine.push(seg([i + 4, -40], [i - 4, 28]));
  return (
    <g transform={`translate(${x} ${y})`} stroke="#000" fill="none">
      <circle r="65.5" />
      <circle r="27.300" strokeWidth="1.200" />
      <path d={lines.join('')} strokeWidth="0.950" />
      <path d={fine.join('')} strokeWidth="0.550" />
      <path stroke="none" fill="#000" d="M-30 -58L-34 -30L-39 -26L-44 -38L-57 -28L-58 -30L-42 -51ZM9 -62L4 -35L0 -28L-5 -34ZM17 -62L31 -36L27 -26L19 -30L14 -22L10 -32ZM58 -32L65 -12L62 -4L59 -14ZM62 20L65 2L49 -1L55 8ZM-51 38L-50 14L-46 20L-39 16ZM-16 36L-13 45L-11 33ZM-1 3L-6 8L-12 9L-22 20L-12 26L0 27ZM5 -20L9 -16L12 -23L18 -21L25 -10L27 -2L25 5L20 8L17 -3L14 -10L10 -4L9 6L6 -6Z" />
      <path d="M13 -61L5 -30" stroke="#9da3ab" strokeWidth="2" />
      <path d="M3 -27L1 26M12 -4L7 25" stroke="#9da3ab" strokeWidth="0.900" />
      <path d="M-62 -22L-34 -30M-60 -27L-31 -33M10 -60L14 -30M17 -62L36 -30M17 -62L40 -24" strokeWidth="0.800" />
    </g>
  );
};

const Model = () => (
  <Scene width="1102" height="498" viewBox="64 156 1102 498">
    <g stroke="#8b9199" strokeWidth="1" shapeRendering="crispEdges">
      <path d="M64 645.500H237" />
      {Array.from({ length: 25 }, (_, i) => (
        <path key={i} d={`M${64 + i * 6.87 + 5} 646V654`} stroke={i % 5 === 4 ? '#7d838c' : '#92989f'} />
      ))}
    </g>
    <path d="M101.500 587V616.500H131" stroke="#777c84" strokeWidth="1.300" fill="none" />
    <g fill="#6c7179" fontFamily="DejaVu Sans, sans-serif" fontWeight="bold" fontSize="11">
      <text x="102" y="589">y</text>
      <text x="133" y="619">x</text>
    </g>
    <path d={meshPath()} stroke="#000" strokeWidth="0.900" />
    <path d={fanPath} stroke="#000" strokeWidth="1" />
    <path d="M578 343.500L612 356L659 384.500L630 370L606 360Z" />
    <g fill="none" stroke="#000" strokeWidth="1">
      {holes.map(h => <circle key={h.join()} cx={h[0]} cy={h[1]} r={HOLE} />)}
    </g>
    <path d={outline(7.5)} fill="none" stroke="#000" strokeWidth="15" />
    <path d={outline(14)} fill="none" stroke="#000" strokeWidth="4" pathLength="1500" strokeDasharray="4 5.091" />
    <path d={rimTicks()} fill="none" stroke="#8d9299" strokeWidth="0.900" strokeDasharray="1 1.3" />
    <Disc x={457.5} y={359.5} />
    <Disc x={770.5} y={361.5} />
  </Scene>
);

/* ---------- data ---------- */
const menus: [string, number][] = [
  ['File', 18], ['Edit', 20], ['View', 25], ['Curve', 31], ['Surface', 39], ['Solid', 26], ['Mesh', 29],
  ['Dimension', 57], ['Transform', 55], ['Tools', 29], ['Analyze', 41], ['Render', 37], ['Panels', 34], ['Help', 25],
];
/* name, tab width, text width */
const tabs: [string, number, number][] = [
  ['Standard', 62, 44], ['CPlanes', 58, 41], ['Set View', 61, 43], ['Display', 53, 38], ['Select', 49, 31],
  ['Viewport Layout', 94, 79], ['Visibility', 56, 43], ['Transform', 66, 51], ['Curve Tools', 76, 60],
  ['Surface Tools', 84, 68], ['Solid Tools', 72, 55], ['Mesh Tools', 74, 57], ['Render Tools', 83, 66],
  ['Drafting', 56, 39], ['New in V5', 68, 50],
];
type Row = { k: string; w: number; v?: string; vw?: number; dim?: boolean; kind?: 'drop' | 'place' | 'file' | 'check'; pad?: number };
const groups: { name: string; w: number; rows: Row[] }[] = [
  { name: 'Viewport', w: 40, rows: [
    { k: 'Title', w: 19, v: 'Top', vw: 18 },
    { k: 'Width', w: 27, v: '1100', vw: 24, dim: true },
    { k: 'Height', w: 30, v: '496', vw: 18, dim: true },
    { k: 'Projection', w: 47, v: 'Parallel', vw: 34, kind: 'drop', pad: 3 },
  ] },
  { name: 'Camera', w: 35, rows: [
    { k: 'Lens Length', w: 58, v: '50.0', vw: 21, dim: true },
    { k: 'Rotation', w: 39, v: '90.0', vw: 21 },
    { k: 'X Location', w: 50, v: '125.000', vw: 39 },
    { k: 'Y Location', w: 50, v: '105.000', vw: 39 },
    { k: 'Z Location', w: 50, v: '8.469', vw: 27 },
    { k: 'Location', w: 40, kind: 'place', pad: 1 },
  ] },
  { name: 'Target', w: 30, rows: [
    { k: 'X Target', w: 40, v: '125.000', vw: 39 },
    { k: 'Y Target', w: 40, v: '105.000', vw: 39 },
    { k: 'Z Target', w: 40, v: '3.500', vw: 27 },
    { k: 'Location', w: 40, kind: 'place', pad: 1 },
  ] },
  { name: 'Wallpaper', w: 48, rows: [
    { k: 'Filename', w: 41, v: '(none)', vw: 30, kind: 'file', pad: 2 },
    { k: 'Show', w: 26, kind: 'check' },
    { k: 'Gray', w: 22, kind: 'check' },
  ] },
];
/* name, slot width, text width, state */
const snaps: [string, number, number, 'on' | 'off' | 'dim'][] = [
  ['End', 44, 19, 'on'], ['Near', 48, 23, 'on'], ['Point', 49, 23, 'on'], ['Mid', 42, 17, 'on'], ['Cen', 44, 19, 'on'],
  ['Int', 37, 11, 'off'], ['Perp', 47, 21, 'off'], ['Tan', 44, 18, 'off'], ['Quad', 51, 25, 'off'], ['Knot', 47, 21, 'off'],
  ['Vertex', 55, 30, 'off'], ['Project', 58, 32, 'dim'], ['Disable', 60, 35, 'dim'],
];
const cells: { t: string; w: number; tw: number; on?: boolean; left?: boolean; sw?: boolean }[] = [
  { t: 'CPlane', w: 57, tw: 41 }, { t: 'x 105.540', w: 88, tw: 53 }, { t: 'y 112.552', w: 88, tw: 53 },
  { t: 'z 0.000', w: 88, tw: 39 }, { t: 'Millimeters', w: 88, tw: 59 }, { t: 'Default', w: 173, tw: 39, left: true, sw: true },
  { t: 'Grid Snap', w: 76, tw: 55 }, { t: 'Ortho', w: 47, tw: 30 }, { t: 'Planar', w: 54, tw: 36 },
  { t: 'Osnap', w: 54, tw: 37, on: true }, { t: 'SmartTrack', w: 85, tw: 66, on: true }, { t: 'Gumball', w: 67, tw: 46, on: true },
  { t: 'Record History', w: 108, tw: 81 }, { t: 'Filter', w: 45, tw: 27 },
  { t: 'Available physical memory: 1436 MB', w: 241, tw: 199, left: true },
];

const taskIcons: { state?: 'open' | 'active'; icon: ReactNode }[] = [
  { state: 'open', icon: (
    <svg width="34" height="30" viewBox="0 0 34 30">
      <path d="M1 4L3 1H12L14 4H31V26H1Z" fill="#e8cf74" />
      <path d="M4 3H10M14 2H19M22 4H28" stroke="#4f9c56" strokeWidth="2" />
      <path d="M11 2H14" stroke="#cc4b36" strokeWidth="2" />
      <path d="M1 7H32L31 27H2Z" fill="#f6e6a0" stroke="#c9ad55" strokeWidth="0.700" />
      <path d="M6 29V20C6 17 9 17 10 17H24C27 17 28 18 28 20V29H23V23H11V29Z" fill="#9bd3ef" stroke="#4d9cc4" />
    </svg>) },
  { icon: (
    <svg width="30" height="32" viewBox="0 0 30 32">
      <path d="M7 1L28 3L27 24L6 21Z" fill="#dfe5ea" stroke="#9ca7ae" />
      <path d="M9 3L26 5L25 21L8 19Z" fill="#1c35c4" /><path d="M9 3L20 4L11 15Z" fill="#5b7ef0" />
      <circle cx="9" cy="16" r="7" fill="#b7d5ee" fillOpacity="0.850" stroke="#e3ecf3" strokeWidth="2" />
      <path d="M14 21L21 29" stroke="#a77b56" strokeWidth="4" />
    </svg>) },
  { icon: (
    <svg width="31" height="31" viewBox="0 0 31 31">
      <path d="M22 0L30 4V26L22 30L9 18L4 22L1 20V10L4 8L9 12Z" fill="#0065a9" />
      <path d="M22 9L14 15L22 21Z" fill="#fff" /><path d="M4 11V19L8 15Z" fill="#fff" />
    </svg>) },
  { icon: (
    <svg width="31" height="31" viewBox="0 0 31 31">
      <circle cx="16" cy="14" r="13" fill="#23408f" /><path d="M10 3C16 0 24 1 27 8C22 4 16 4 10 3Z" fill="#5b9be0" />
      <path d="M2 6C4 9 8 8 12 10C15 13 11 15 9 16C12 21 18 21 22 19C26 16 26 8 22 3C29 6 32 15 28 22C23 31 9 32 4 24C0 18 0 11 2 6Z" fill="#e66a1d" />
      <path d="M26 6C31 14 29 24 20 28C28 22 28 14 26 6Z" fill="#fbc53a" />
    </svg>) },
  { icon: (
    <svg width="32" height="32" viewBox="0 0 32 32">
      <path d="M26 21C22 28 8 27 7 17C6 7 24 4 26 17H11" fill="none" stroke="#2a93d4" strokeWidth="6" />
      <path d="M26 21C22 28 8 27 7 17C6 7 24 4 26 17H11" fill="none" stroke="#7ed0f5" strokeWidth="4" />
      <path d="M4 29C-2 24 12 4 25 3C29 3 29 6 27 9" fill="none" stroke="#f0cb3c" strokeWidth="2.600" />
    </svg>) },
  { state: 'open', icon: (
    <svg width="30" height="30" viewBox="0 0 30 30">
      <circle cx="15" cy="15" r="14.500" fill="#f4c934" />
      <path d="M15 15L2.500 7.700A14.500 14.500 0 0 1 27.500 7.700Z" fill="#da4436" />
      <path d="M15 8H27.700" stroke="#da4436" strokeWidth="1" />
      <path d="M15 29.500A14.500 14.500 0 0 1 2.500 7.700L8.800 18.500L15 21.500L18 20.500Z" fill="#1ea362" />
      <circle cx="15" cy="15" r="6.700" fill="#fff" /><circle cx="15" cy="15" r="5.300" fill="#4a8af4" />
    </svg>) },
  { icon: (
    <svg width="30" height="30" viewBox="0 0 30 30">
      <rect width="30" height="30" fill="#098a0b" />
      <path d="M4 9L26 7L25 26L5 24Z" fill="#fff" /><path d="M10 9C10 2 18 1 19 8" fill="none" stroke="#fff" strokeWidth="1.500" />
      <path d="M9 13L14 12.500V17H9ZM15.500 12.500L21 12V17H15.500ZM9 18.500H14V22.500L9 22ZM15.500 18.500H21V23L15.500 22.500Z" fill="#098a0b" />
    </svg>) },
  { icon: (
    <svg width="30" height="30" viewBox="0 0 30 30">
      <path d="M10 3L26 4L29 25L17 28Z" fill="#dcdfe0" stroke="#8c8e8a" /><path d="M9 3L26 4L19 27L1 21Z" fill="#7cc7d6" />
      <path d="M9 3L26 4L22 15L4 13Z" fill="#a8e0e8" /><path d="M10 3H26" stroke="#666" strokeWidth="2.500" strokeDasharray="1 1" />
      <path d="M1 21L19 27L18 24Z" fill="#e6f2f4" />
    </svg>) },
  { state: 'active', icon: <RhinoHead size={32} /> },
  { state: 'open', icon: (
    <svg width="32" height="32" viewBox="0 0 32 32">
      <path d="M2 18C2 9 12 5 21 7C28 9 30 16 26 22C22 29 13 28 13 24C13 21 9 22 6 23C3 23 2 21 2 18Z" fill="#cfe4f2" stroke="#7ba5c2" />
      <circle cx="7" cy="16" r="2.500" fill="#d94b3a" /><circle cx="12" cy="11" r="2.500" fill="#4fa64a" />
      <circle cx="19" cy="10" r="2.700" fill="#f0bb31" /><circle cx="14" cy="18" r="2.500" fill="#4680c2" />
      <path d="M26 8L19 29L17 30L18 26L24 7Z" fill="#d98a3d" /><path d="M24 1L29 0L30 6L27 9L24 8Z" fill="#b28455" />
    </svg>) },
];

const Dropdown = () => (
  <svg width="9" height="7" viewBox="0 0 9 7"><path d="M1 1.500L4.500 5L8 1.500" fill="none" stroke="#555" strokeWidth="1.800" /></svg>
);

export default function App() {
  return (
    <Screen>
      <Global />
      <TitleBar>
        <TitleIcon><RhinoHead size={16} /></TitleIcon>
        <TitleText><Fit w={425}>a fidget - Rhinoceros 5.0 Evaluation (68 Days Remaining) - [Top]</Fit></TitleText>
        <WinButtons>
          <WinButton $w={36}><svg width="10" height="10"><rect x="1" y="6" width="8" height="2" fill="#1a2b3a" /></svg></WinButton>
          <WinButton $w={22}>
            <svg width="11" height="11" viewBox="0 0 11 11" fill="none" stroke="#1a2b3a"><path d="M3 1.500V0.500H10.500V7.500H9" /><rect x="0.700" y="3" width="7" height="6.500" strokeWidth="1.200" /><path d="M0 3H8.500" strokeWidth="1.500" /></svg>
          </WinButton>
          <WinButton $w={45} $close><svg width="9" height="9"><path d="M1 1L8 8M8 1L1 8" stroke="#fff" strokeWidth="1.800" /></svg></WinButton>
        </WinButtons>
      </TitleBar>
      <MenuBar>{menus.map(([m, w]) => <Fit key={m} w={w}>{m}</Fit>)}</MenuBar>
      <CommandArea>
        <Grip $h={46} />
        <CommandBox>
          <HistoryRow>
            <Fit w={251}>{'File "F:\\shaheen\\a fidget.stl" successfully read'}</Fit>
            <ScrollCol>
              <svg width="16" height="28" viewBox="0 0 16 28" fill="none" stroke="#555" strokeWidth="2"><path d="M4.500 9L8 5.500L11.500 9M4.500 19L8 22.500L11.500 19" /></svg>
            </ScrollCol>
          </HistoryRow>
          <PromptRow>
            <span><Fit w={61}>Command:</Fit><Caret /></span>
            <SpinCol>
              <SpinButton><svg width="5" height="3"><path d="M2.500 0L5 3H0Z" /></svg></SpinButton>
              <SpinButton><svg width="5" height="3"><path d="M2.500 3L5 0H0Z" /></svg></SpinButton>
            </SpinCol>
          </PromptRow>
        </CommandBox>
      </CommandArea>
      <ToolTabs>
        {tabs.map(([t, w, tw], i) => <ToolTab key={t} $w={w} $active={i === 0}><Fit w={tw}>{t}</Fit></ToolTab>)}
        <TabGear><Gear /></TabGear>
      </ToolTabs>
      <ToolBar>
        <Grip $h={34} />
        <ToolIcons>{toolIcons.map((icon, i) => <React.Fragment key={i}>{icon}</React.Fragment>)}</ToolIcons>
      </ToolBar>
      <Work>
        <LeftBar>
          <HGrip $w={55} />
          <LeftGrid>{leftIcons.map((icon, i) => <React.Fragment key={i}>{icon}</React.Fragment>)}</LeftGrid>
        </LeftBar>
        <Center>
          <Viewport>
            <Model />
            <ViewLabel>
              <Fit w={20}>Top</Fit>
              <LabelDrop><svg width="8" height="5"><path d="M0 0H8L4 4.500Z" /></svg></LabelDrop>
            </ViewLabel>
          </Viewport>
          <ViewTabs>
            <ViewTab $w={98} $pad={13}><Fit w={75}>Perspective</Fit></ViewTab>
            <ViewTab $w={61} $pad={25} $lap={12} $active $skew={42}><Fit w={26}>Top</Fit></ViewTab>
            <ViewTab $w={58} $pad={14}><Fit w={35}>Front</Fit></ViewTab>
            <ViewTab $w={58} $pad={13}><Fit w={36}>Right</Fit></ViewTab>
            <ViewTab $w={40} $pad={17} $plain>
              <svg width="10" height="24" viewBox="0 0 10 24"><path d="M3.500 7.500H6.500V10.500H9.500V13.500H6.500V16.500H3.500V13.500H0.500V10.500H3.500Z" fill="#f2f3f6" stroke="#7c8088" /></svg>
            </ViewTab>
          </ViewTabs>
        </Center>
        <RightPanel>
          <HGrip $w={190} />
          <PanelTabs>
            <PanelTab $w={42} $active>
              <svg width="16" height="16" viewBox="4 3 20 20"><Wheel /></svg>P...
            </PanelTab>
            <PanelTab $w={42}>
              <svg width="16" height="16" viewBox="4 3 20 21"><Layers /></svg>L...
            </PanelTab>
            <PanelTab $w={43}>
              <svg width="15" height="15" viewBox="0 0 15 15"><rect x="0.700" y="1.700" width="13.600" height="10" fill="#b5b7b9" stroke="#222" strokeWidth="1.400" /><path d="M5 12H10V14H5Z" /></svg>Di...
            </PanelTab>
            <PanelTab $w={45}>
              <svg width="15" height="15" viewBox="0 0 15 15"><rect x="0.500" y="0.500" width="14" height="14" fill="#d8e0f5" stroke="#44558f" /><path d="M1 2H14" stroke="#2c4596" strokeWidth="2.500" /><circle cx="7.500" cy="9" r="5" fill="#3858c8" /><path d="M5.800 8C5.800 5.800 9.200 5.800 9.200 7.800C9.200 9 7.500 9 7.500 10.500M7.500 11.500V12.500" fill="none" stroke="#fff" strokeWidth="1.300" /></svg>H...
            </PanelTab>
            <PanelGear><Gear /></PanelGear>
          </PanelTabs>
          <PanelBody>
            <Grid>
              {groups.map(g => (
                <div key={g.name}>
                  <GroupHead><Fit w={g.w}>{g.name}</Fit></GroupHead>
                  {g.rows.map((r, i) => (
                    <PropRow key={i} $dim={r.dim}>
                      <span />
                      <PropLabel><Fit w={r.w}>{r.k}</Fit></PropLabel>
                      <PropValue $dim={r.dim} $pad={r.pad}>
                        {r.v && <Fit w={r.vw || 20}>{r.v}</Fit>}
                        {r.kind === 'drop' && <SmallButton><Dropdown /></SmallButton>}
                        {r.kind === 'file' && <SmallButton>...</SmallButton>}
                        {r.kind === 'place' && <PlaceButton><Fit w={36}>Place...</Fit></PlaceButton>}
                        {r.kind === 'check' && <PropCheck><Tick /></PropCheck>}
                      </PropValue>
                    </PropRow>
                  ))}
                </div>
              ))}
            </Grid>
          </PanelBody>
        </RightPanel>
      </Work>
      <SnapRow>
        <Grip $h={19} />
        <SnapList>
          {snaps.map(([t, w, tw, s]) => (
            <SnapItem key={t} $w={w}>
              <Check $dim={s === 'dim'}>{s === 'on' && <Tick />}</Check>
              <Fit w={tw}>{t}</Fit>
            </SnapItem>
          ))}
        </SnapList>
      </SnapRow>
      <StatusBar>
        {cells.map(c => (
          <StatusCell key={c.t} $w={c.w} $on={c.on} $left={c.left}>
            {c.sw && <Swatch />}
            <Fit w={c.tw}>{c.t}</Fit>
          </StatusCell>
        ))}
      </StatusBar>
      <TaskBar>
        <StartButton>
          <svg width="29" height="27" viewBox="0 0 29 27" fill="#fff"><path d="M1 4.500L12 3V13H1ZM13.500 2.800L28 1V13H13.500ZM1 14.300H12V24.200L1 22.800ZM13.500 14.300H28V26.200L13.500 24.400Z" /></svg>
        </StartButton>
        <Tasks>{taskIcons.map((t, i) => <Task key={i} $state={t.state}>{t.icon}</Task>)}</Tasks>
        <Tray>
          <TraySlot $w={43}>
            <svg width="31" height="20" viewBox="0 0 31 20"><rect x="1" y="1" width="29" height="17.500" rx="1" fill="#fff" stroke="#222d35" strokeWidth="1.300" /><path d="M4.500 5.500H27M4.500 9H27" stroke="#222d35" strokeWidth="1.600" strokeDasharray="1.800 1.600" /><path d="M3.500 3.500H27.500V15.500H3.500Z" fill="none" stroke="#222d35" strokeWidth="0.800" /><path d="M6 13H25" stroke="#222d35" strokeWidth="1.200" strokeDasharray="2 2 11 2" /></svg>
          </TraySlot>
          <TraySlot $w={22}><svg width="10" height="6"><path d="M1 5L5 1L9 5Z" fill="#fff" stroke="#34505f" strokeWidth="0.600" /></svg></TraySlot>
          <TraySlot $w={29}>
            <svg width="17" height="17" viewBox="0 0 17 17"><path d="M1.500 1V16" stroke="#fff" strokeWidth="2" /><path d="M3 2C6 0 9 5 15 3V9C10 11 7 7 3 9Z" fill="#fff" stroke="#334" strokeWidth="0.500" /><circle cx="11" cy="11" r="5" fill="#d4252a" /><path d="M9 9L13 13M13 9L9 13" stroke="#fff" strokeWidth="1.500" /></svg>
          </TraySlot>
          <TraySlot $w={19}>
            <svg width="11" height="16" viewBox="0 0 11 16"><rect x="1.500" y="2.500" width="8" height="13" fill="#333d45" stroke="#fff" strokeWidth="1.400" /><rect x="4" y="0.500" width="3" height="2" fill="#fff" /><rect x="3.200" y="9" width="4.600" height="5" fill="#fff" /></svg>
          </TraySlot>
          <TraySlot $w={23}>
            <svg width="17" height="13" viewBox="0 0 17 13" fill="#fff" stroke="#333d45" strokeWidth="0.600"><path d="M0.500 10.500H2.500V12.500H0.500ZM3.700 8.500H5.700V12.500H3.700ZM7 6H9V12.500H7ZM10.200 3.500H12.200V12.500H10.200Z" /><path d="M13.400 1H15.800V12.500H13.400Z" /></svg>
          </TraySlot>
          <TraySlot $w={31}>
            <svg width="17" height="16" viewBox="0 0 17 16"><path d="M1 5H4L9 1V15L4 11H1Z" fill="#fff" stroke="#334" strokeWidth="0.600" /><circle cx="11" cy="10.500" r="4.200" fill="#e9c9cb" stroke="#d4252a" strokeWidth="1.800" /><path d="M8 8L14 13" stroke="#d4252a" strokeWidth="1.800" /></svg>
          </TraySlot>
          <TraySlot $w={39}><Fit w={23}>ENG</Fit></TraySlot>
          <Clock><Fit w={43}>8:35 AM</Fit><Fit w={57}>26-Aug-17</Fit></Clock>
        </Tray>
      </TaskBar>
    </Screen>
  );
}
